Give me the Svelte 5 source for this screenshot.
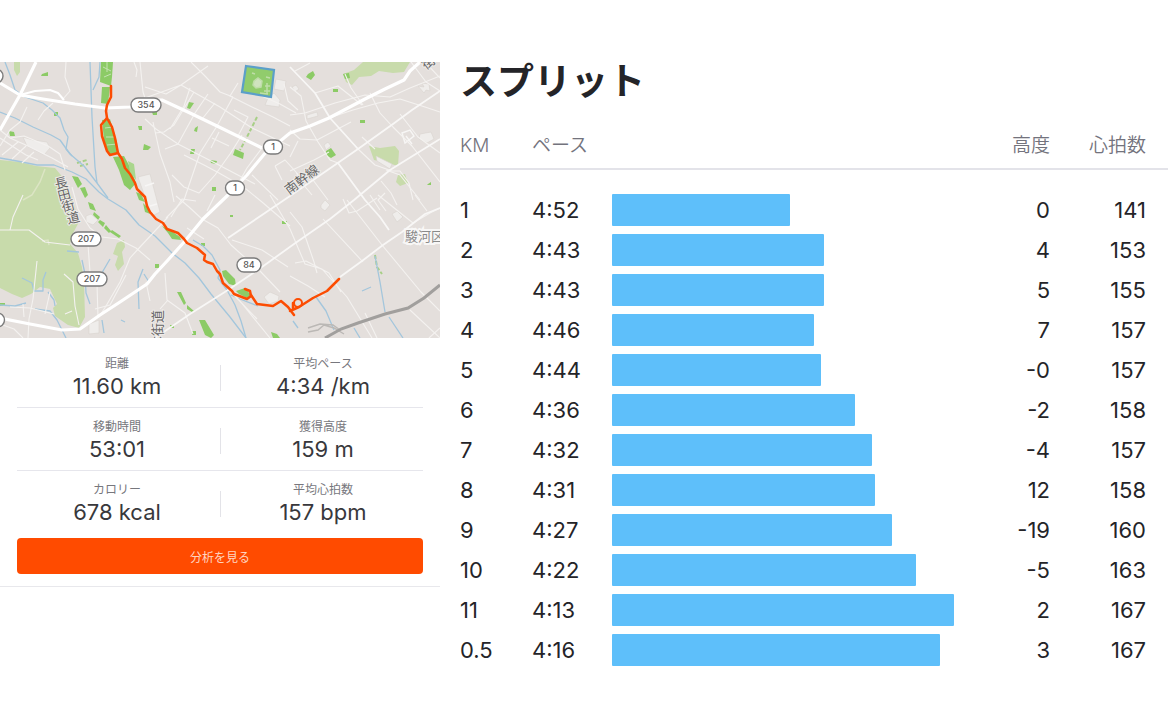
<script>
  const stats = [
    [['距離', '11.60 km'], ['平均ペース', '4:34 /km']],
    [['移動時間', '53:01'], ['獲得高度', '159 m']],
    [['カロリー', '678 kcal'], ['平均心拍数', '157 bpm']]
  ];

  // km, pace, bar length, elevation, heart rate
  const splits = [
    ['1', '4:52', 178, '0', 141],
    ['2', '4:43', 212, '4', 153],
    ['3', '4:43', 212, '5', 155],
    ['4', '4:46', 202, '7', 157],
    ['5', '4:44', 209, '-0', 157],
    ['6', '4:36', 243, '-2', 158],
    ['7', '4:32', 260, '-4', 157],
    ['8', '4:31', 263, '12', 158],
    ['9', '4:27', 280, '-19', 160],
    ['10', '4:22', 304, '-5', 163],
    ['11', '4:13', 342, '2', 167],
    ['0.5', '4:16', 328, '3', 167]
  ];
  const longest = Math.max(...splits.map((s) => s[2]));

  const shields = [
    { x: 146, y: 43, w: 30, label: '354' },
    { x: 273, y: 85, w: 19, label: '1' },
    { x: 235, y: 126, w: 19, label: '1' },
    { x: 86, y: 177, w: 30, label: '207' },
    { x: 92, y: 217, w: 30, label: '207' },
    { x: 249, y: 203, w: 24, label: '84' },
    { x: -4, y: 14, w: 14, label: '' },
    { x: -4, y: 258, w: 17, label: '' }
  ];

  const smallRoads = [
    'M66 0L65 15L70 29L62 38M134 0L137 8L136 15M53 41L44 49L38 58M27 45L20 60L10 68L0 84',
    'M0 68L10 76L28 84L52 96L68 105M0 76L12 84L26 93L38 98M18 80L2 93M26 84L12 97M34 90L22 101M10 76L24 74L48 84L60 92L65 108',
    'M140 0L143 30L145 36M145 57L156 67L178 82L215 101L255 122M153 60L160 92L170 120L174 140',
    'M145 36L181 23L208 4M145 25L166 32L181 23L220 45L252 66L290 84M191 0L205 14L220 30L233 35',
    'M233 35L217 64L200 91L184 138L166 156M194 30L174 63L164 70L155 71M190 26L184 44L170 67M215 41L202 57',
    'M165 87L178 82L195 51L208 32M172 113L184 125L199 131L215 113L230 92L242 73M184 93L204 103L219 111L240 123',
    'M212 76L229 84M219 70L211 86M234 48L248 55L238 74M262 86L247 106L238 122M255 31L280 42L296 51',
    'M238 21L230 34L252 45L273 55L290 64M284 22L288 39L298 48M275 104L285 98L296 110L301 120M275 104L282 118',
    'M290 53L305 51L335 41L365 33L390 35L410 26L440 14M310 1L295 9M290 25L301 34L306 59L318 80L330 98L338 101',
    'M315 31L338 24L362 43M345 12L351 26L363 43M290 68L300 77L317 78L351 60M329 56L353 48L378 41L400 37L425 45L440 50',
    'M370 31L380 51L393 65L412 84L440 120M340 67L358 87L375 103L392 109L400 109L409 121L413 138',
    'M290 109L314 98L329 90M298 79L290 95M313 118L328 138M362 75L375 87M400 52L418 75L440 91M386 108L400 113L420 138',
    'M381 119L391 131L397 143M425 0L440 16M411 0L426 20L440 29',
    'M23 133L13 155L10 168L0 168M10 168L29 168L45 180L70 183M37 199L33 237L29 257L28 276M23 242L24 255M50 230L45 252M10 245L30 246L54 252',
    'M102 175L118 177L136 186L150 198M168 155L140 185L130 196L120 220L106 244L99 255M88 183L90 210L97 222L98 255M72 125L78 147L90 166L102 175',
    'M64 212L73 220L75 244L79 263M72 249L65 252M0 262L14 267L23 276M95 247L110 243L126 213',
    'M176 134L189 145L202 157L218 166L231 183L260 209L280 230M171 155L182 137L196 139M187 166L204 177M215 133L207 149',
    'M165 211L167 238L185 251L193 272M168 238L160 247M146 220L150 239M235 233L270 276M230 229L257 257M232 178L262 188L288 205',
    'M270 133L290 167L305 202L322 207L347 235L372 276M290 214L308 224L325 235M295 201L306 199L329 211L341 230',
    'M290 150L302 165L314 200L317 211M323 157L363 200M343 137L349 151L357 149L377 136M347 138L382 183L421 230L440 249',
    'M378 133L413 161L430 151L440 146M370 133L380 148M415 133L427 149M410 248L440 276M429 276L440 266M365 251L377 276',
    'M297 111L302 121L312 133M385 131L378 138L386 149M240 122L262 140L290 164M252 113L278 138'
  ];
  const mediumRoads = [
    'M155 276L190 252L228 228L262 205L294 182L330 157L354 138L390 108L440 77',
    'M228 176L262 153L290 134L358 87L393 62L412 48L440 29',
    'M340 215L362 199L383 183L402 170L425 152L440 146',
    'M290 5L315 31L330 56L358 87',
    'M338 101L365 138L380 155L389 168'
  ];
  const majorRoads = [
    'M36 0L20 33L0 68',
    'M0 21L20 33L43 37L75 42L105 46L130 45L152 38L162 38L190 51L217 64L262 86',
    'M266 90L247 113L228 133L203 157L185 179L168 198L155 212L147 222L120 240L100 253L80 267L62 268L30 262L0 256',
    'M273 85L290 71L310 64L329 56L365 37L385 27L404 18L410 9L420 0'
  ];
  const water = [
    'M5 0L10 13L15 28L25 35L43 41L52 48L60 56L64 68L68 75L66 87L72 94',
    'M0 50L15 56L33 65L51 73L60 78L70 92L84 104L97 121L108 136',
    'M90 0L91 28L92 55L95 105L97 121M100 0L99 15L93 28',
    'M0 96L17 99L37 103L54 103L72 110L86 117L99 130L108 137L126 148L139 163L155 174L172 191L185 201L199 216L211 232L230 255L246 276',
    'M193 178L203 184L212 193L220 208L218 216L227 228L235 243L241 259L246 276',
    'M231 233L240 237L258 244',
    'M375 194L380 220L385 250M389 255L403 276M362 229L371 225',
    'M316 235L326 249L334 268M354 266L360 276M293 259L298 266',
    'M22 216L32 221L34 229L43 229L43 218L46 210M82 198L85 212L86 231L90 242M67 189L79 190',
    'M110 197L103 209L101 216M48 230L54 238L55 244M35 247L50 249L57 258L66 276',
    'M143 207L138 220L139 247M144 212L149 220M102 258L104 271M0 243L15 244L26 241M121 258L125 260'
  ];
</script>

<main>
  <section class="activity">
    <svg class="map" viewBox="0 0 440 276" role="img" aria-label="ルート">
      <rect width="440" height="276" fill="#e4dfdc" />

      <g fill="#c8dbab">
        <path d="M0 98L20 100L36 104L55 106L65 118L72 136L79 160L72 173L70 182L78 191L82 205L84 220L85 255L79 266L68 263L55 254L53 246L57 242L50 227L40 225L31 232L22 236L12 232L0 226Z" />
        <path d="M343 12L354 8L363 0L410 0L404 10L393 11L379 9L371 14L359 15L352 23L346 20Z" />
        <path d="M369 84L380 86L395 84L399 89L398 104L388 101L374 98Z" />
        <path d="M398 113L405 112L408 121L400 124L396 120Z" />
        <path d="M117 181L124 178L125 185L122 190L124 202L118 209L115 203L118 194L113 192Z" />
        <path d="M14 0h6v10l-3 4l-3-6Z" />
      </g>

      <g fill="#8ccb66">
        <path d="M101 0H113L112 15L111 24L100 20Z" />
        <path d="M102 25H110L108 42L101 41Z" />
        <path d="M102 58L110 57L117 80L118 91L109 93L104 78Z" />
        <path d="M113 95L124 94L130 105L136 121L130 128L124 123L119 108Z" />
        <path d="M136 130L141 132L145 140L139 138Z" />
        <path d="M72 114L78 115L82 122L78 126ZM80 126L85 125L88 133L85 136ZM88 140L93 142L96 149L90 147ZM94 150L100 155L98 158L93 153ZM100 158L105 161L103 165L98 160ZM106 163L111 169L109 171L104 166ZM112 168L121 174L119 176L110 170Z" />
        <path d="M143 141L149 147L153 153L145 150ZM162 164L170 168L180 175L181 178L172 177L168 171Z" />
        <path d="M222 209L226 208L235 217L236 224L229 222L223 214ZM236 229L245 226L251 233L247 236L239 232Z" />
        <path d="M177 230L181 230L186 241L184 243ZM187 243L194 249L192 250L187 247ZM199 258L205 258L214 273L211 276L205 273ZM271 270L277 272L280 276H273Z" />
        <path d="M235 87L244 91L243 97L233 93ZM189 40L194 41L190 47L187 46ZM191 87L195 87L194 92L190 92ZM210 98L217 99L216 102L211 101ZM212 125h4v4h-4ZM195 66l3-2-1 6-3-1Z" />
        <path d="M308 12L313 9L315 13L311 18L306 15ZM343 12L349 11L350 16L345 17ZM333 27h5v3h-5ZM360 58h5v3h-5ZM326 89L331 86L336 93L331 96L326 93Z" />
        <path d="M42 12L48 10L48 14L41 14ZM54 50h4v4h-4ZM9 69L14 70L15 74L10 74ZM144 82L151 85L148 88L143 88ZM138 64h4v4h-3Z" />
        <path d="M282 159h5v3h-5ZM155 202h4v4h-4ZM170 263h4v3h-4ZM192 269h4v4h-4ZM201 181h4v3h-4ZM230 153h3v2h-3ZM428 122l3-2v3h-4ZM0 241h5v3h-5ZM152 50l5 0v3h-4Z" />
      </g>
      <path d="M128 99L134 102L136 118L130 110Z" fill="#a9d68c" />
      <path d="M257 55L251 67L246 77L240 88M375 193L377 205L382 212M77 101L87 98M80 104L88 102" fill="none" stroke="#a7cf86" stroke-width="2" stroke-dasharray="4 2" />

      <g fill="#efedeb" stroke="#d8d3ce" stroke-width="0.6">
        <path d="M23 75L33 78L47 80L50 86L44 93L35 88L27 84Z" />
        <path d="M86 154L91 152L98 158L93 163L86 160Z" />
        <path d="M138 115L150 112L160 150L152 154L145 135Z" />
        <path d="M264 235L270 230L279 234L278 239L269 242Z" />
        <path d="M321 143L325 138L330 143L325 149L321 146ZM392 152L397 149L403 155L397 160ZM324 83L328 80L331 84L326 88Z" />
        <path d="M418 24L424 25L422 21L429 22L430 29L426 28L424 31ZM420 72L431 70L434 77L427 81L419 77Z" />
        <path d="M307 53L317 50L318 54L307 57ZM276 17L286 19L284 29L274 27ZM274 31L280 38L279 45L265 43L268 36ZM292 25l4-2 3 4-4 3ZM376 94L392 102L390 107L377 99Z" />
        <path d="M89 262L99 258V271L89 272Z" />
      </g>
      <path d="M145 124L154 121M150 144L157 142M402 71L410 68L414 74L405 81ZM406 74L412 82" fill="none" stroke="#f7f6f5" stroke-width="1.4" />

      <g fill="none" stroke="#a3c6dc" stroke-width="1.3" stroke-linejoin="round">
        {#each water as d}<path {d} />{/each}
      </g>

      <path d="M105 66L113 65M106 75L115 75M107 83L117 82M103 5L111 9M104 15L111 12M107 0V10" stroke="#c5e2b3" fill="none" />
      <path d="M45 107L40 120L32 133L23 138M42 179L48 178L49 183" stroke="#dce5c4" stroke-width="1.5" fill="none" />

      <g fill="none" stroke="#f4f2f0" stroke-width="1.1" stroke-linejoin="round">
        {#each smallRoads as d}<path {d} />{/each}
      </g>
      <path d="M20 33L35 29L50 28L58 31L64 38" fill="none" stroke="#fff" stroke-width="2" stroke-linejoin="round" />
      <g fill="none" stroke="#f8f7f6" stroke-width="1.8" stroke-linejoin="round">
        {#each mediumRoads as d}<path {d} />{/each}
      </g>
      <g fill="none" stroke="#fff" stroke-width="3.2" stroke-linejoin="round">
        {#each majorRoads as d}<path {d} />{/each}
      </g>

      <path d="M246 4L274 8L271 35L242 30Z" fill="#91cc6c" stroke="#5b9fc9" stroke-width="2.2" />
      <path d="M254 19l4-3 4 3-1 6-5 1-3-3ZM252 11l3 1M266 15l4 1M265 24h5M264 29h6M267 21v11M260 31l8 1" fill="#cfe3bf" stroke="#bfdda9" stroke-width="1.5" />

      <path d="M308 270L318 268L324 263L334 266L344 272M308 266L320 262L333 263L340 268" fill="none" stroke="#bbb8b5" stroke-width="1.4" />
      <path d="M325 276L341 267L358 261L385 252L408 246L424 236L440 223" fill="none" stroke="#a19f9d" stroke-width="3" />

      <g class="place">
        <text x="56 59 63 68" y="127 139 150 162" rotate="-14">長田街道</text>
        <text transform="translate(289 133) rotate(-37)">南幹線</text>
        <text transform="translate(162 287) rotate(-90)">本街道</text>
        <text transform="translate(426 8) rotate(-37)">街</text>
      </g>
      <text class="ward" x="405" y="179">駿河区</text>

      <g fill="none" stroke="#fc4c02" stroke-width="2.5" stroke-linejoin="round" stroke-linecap="round">
        <path d="M111 24L111 35L107 43L106 49L107 56L112 65L115 76L118 91L122 97L125 106L130 112L135 121L137 127L145 135L147 144L150 150L156 157L163 161L167 167L178 171L184 177L187 181L197 186L205 193L204 198L207 200L213 202L217 209L220 212L223 221L232 229L234 232L247 237L251 234L250 229L245 227" />
        <path d="M107 56L101 63L102 74L107 89L110 93L118 91" />
        <path d="M251 233L257 242L273 244L281 239L288 245L294 253M290 249L299 245L313 236L327 229L332 224L339 217M293 247V241" />
        <circle cx="298" cy="241" r="4" stroke-width="2" />
      </g>

      {#each shields as s}
        <rect x={s.x - s.w / 2} y={s.y - 7} width={s.w} height="14" rx="7" fill="#fff" stroke="#7b7b7b" stroke-width="1.4" />
        <text class="shield" x={s.x} y={s.y + 3}>{s.label}</text>
      {/each}
    </svg>

    <div class="summary">
      {#each stats as row}
        <dl class="stat-row">
          {#each row as [label, value]}
            <div class="stat">
              <dt>{label}</dt>
              <dd>{value}</dd>
            </div>
          {/each}
        </dl>
      {/each}
      <button type="button">分析を見る</button>
    </div>
  </section>

  <section class="splits">
    <h1>スプリット</h1>
    <table>
      <colgroup>
        <col class="km" />
        <col class="pace" />
        <col />
        <col class="elevation" />
        <col class="heart" />
      </colgroup>
      <thead>
        <tr>
          <th scope="col">KM</th>
          <th scope="col" colspan="2">ペース</th>
          <th scope="col" class="number">高度</th>
          <th scope="col" class="number last">心拍数</th>
        </tr>
      </thead>
      <tbody>
        {#each splits as [km, pace, length, elevation, heart]}
          <tr>
            <td>{km}</td>
            <td>{pace}</td>
            <td><div class="bar" style:width="{(length / longest) * 100}%"></div></td>
            <td class="number">{elevation}</td>
            <td class="number last">{heart}</td>
          </tr>
        {/each}
      </tbody>
    </table>
  </section>
</main>

<style>
  :global(body) {
    margin: 0;
    background: #fff;
  }

  main {
    display: grid;
    grid-template-columns: minmax(0, 440fr) minmax(0, 708fr);
    gap: 20px;
    align-items: start;
    padding: 62px 4px 32px 0;
    color: #242428;
    font-family: Inter, 'Noto Sans CJK JP', sans-serif;
  }

  .activity {
    border-bottom: 1px solid #e8e8ec;
  }

  .map {
    display: block;
    width: 100%;
    height: auto;
    overflow: hidden;
  }

  .place {
    fill: #666;
    font-size: 13px;
    stroke: #eeebe8;
    stroke-width: 2px;
    paint-order: stroke;
  }

  .ward {
    fill: #8a8a8a;
    font-size: 13px;
    stroke: #f8f7f6;
    stroke-width: 4px;
    paint-order: stroke;
  }

  .shield {
    fill: #555;
    font-size: 9px;
    font-weight: 500;
    text-anchor: middle;
  }

  .summary {
    padding: 7px 17px 12px;
  }

  .stat-row {
    display: grid;
    grid-template-columns: 1fr 1fr;
    gap: 6px;
    margin: 0;
    padding: 11px 0 7px;
    border-bottom: 1px solid #e6e6ec;
    text-align: center;
    position: relative;
  }

  .stat-row:last-of-type {
    padding-bottom: 12px;
    border-bottom: 0;
  }

  .stat-row::after {
    content: '';
    position: absolute;
    left: 50%;
    top: 20px;
    width: 1px;
    height: 26px;
    background: #e3e3e8;
  }

  dt {
    color: #77777d;
    font-size: 12px;
    line-height: 16px;
  }

  dd {
    margin: 0;
    color: #38383c;
    font-size: 22px;
    line-height: 28px;
  }

  button {
    display: block;
    width: 100%;
    height: 36px;
    padding: 0;
    border: 0;
    border-radius: 4px;
    background: #ff4b00;
    color: #ffd5c2;
    font: inherit;
    font-size: 12px;
  }

  h1 {
    margin: 0 0 22px;
    font-size: 37px;
    font-weight: 700;
    line-height: 40px;
  }

  table {
    width: 100%;
    border-collapse: collapse;
    table-layout: fixed;
  }

  .km {
    width: 72px;
  }

  .pace {
    width: 80px;
  }

  .elevation {
    width: 96px;
  }

  .heart {
    width: 118px;
  }

  th {
    height: 44px;
    padding: 0;
    border-bottom: 2px solid #e3e3e9;
    color: #73737d;
    font-size: 19px;
    font-weight: 350;
    line-height: 28px;
    text-align: left;
  }

  tbody::before {
    content: '';
    display: block;
    height: 20px;
  }

  td {
    height: 40px;
    padding: 0;
    font-size: 22px;
    line-height: 28px;
  }

  .number {
    text-align: right;
  }

  .last {
    padding-right: 22px;
  }

  .bar {
    height: 32px;
    border-radius: 1px;
    background: #5ebffa;
  }
</style>
